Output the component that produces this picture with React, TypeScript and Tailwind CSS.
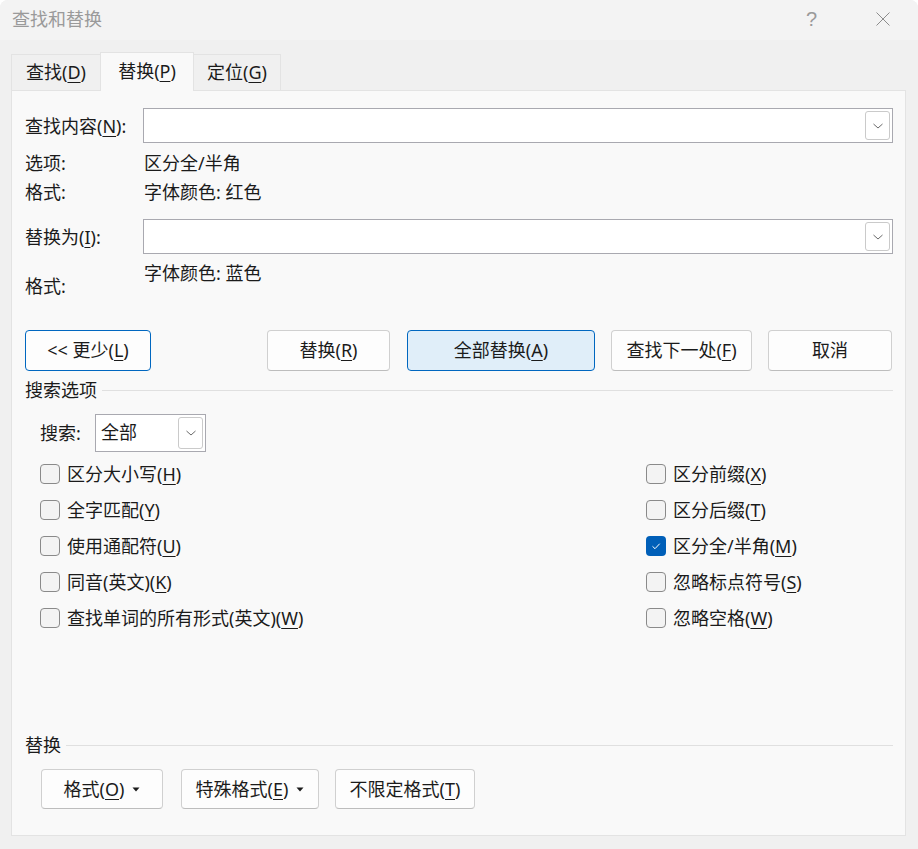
import type { ReactNode } from "react";

const ink = "text-[#1b1b1b]";

function Key({ k }: { k: string }) {
  return <span className="underline decoration-1 underline-offset-[3px]">{k}</span>;
}

function Chevron() {
  return (
    <svg width="12" height="8" viewBox="0 0 12 8" fill="none">
      <path d="M1.5 2l4.5 4 4.5-4" stroke="#6a6a6a" strokeWidth="1" />
    </svg>
  );
}

function Caret() {
  return (
    <svg width="8" height="5" viewBox="0 0 8 5" className="ml-[8px]">
      <path d="M0.5 0.5h7L4 4.5z" fill="#1b1b1b" />
    </svg>
  );
}

function Combo({ value, className }: { value?: string; className: string }) {
  return (
    <div className={`flex border border-[#a9a9b0] bg-white p-[2px] ${className}`}>
      <div className="flex-1 pl-[3px] leading-[30px]">{value}</div>
      <div className="flex w-[25px] items-center justify-center rounded-[3px] border border-[#cacaca] bg-white">
        <Chevron />
      </div>
    </div>
  );
}

function Button({
  children,
  width,
  tone = "plain",
  className = ""
}: {
  children: ReactNode;
  width: string;
  tone?: "plain" | "focus" | "default";
  className?: string;
}) {
  const look =
    tone === "default"
      ? "border-[#0067c0] bg-[#e0eef9]"
      : tone === "focus"
        ? "border-[#0067c0] bg-[#fdfdfd]"
        : "border-[#d0d0d0] border-b-[#bdbdbd] bg-[#fdfdfd]";
  return (
    <div className={`flex h-full items-center justify-center rounded-[4px] border ${look} ${width} ${className}`}>
      {children}
    </div>
  );
}

function Check({ label, checked = false }: { label: ReactNode; checked?: boolean }) {
  return (
    <div className="flex h-[36px] items-center gap-[7px]">
      {checked ? (
        <span className="flex h-[20px] w-[20px] items-center justify-center rounded-[4px] bg-[#005fb8]">
          <svg width="12" height="12" viewBox="0 0 12 12" fill="none">
            <path d="M2.5 6.3l2.5 2.4 4.7-5" stroke="white" strokeWidth="1" />
          </svg>
        </span>
      ) : (
        <span className="h-[20px] w-[20px] rounded-[4px] border border-[#8a8a8a] bg-[#f3f3f3]" />
      )}
      <span className="leading-[28px]">{label}</span>
    </div>
  );
}

function GroupTitle({ title, className = "" }: { title: string; className?: string }) {
  return (
    <div className={`flex items-center leading-[28px] ${className}`}>
      <span>{title}</span>
      <div className="ml-[5px] h-px flex-1 bg-[#e0e0e0]" />
    </div>
  );
}

function Tab({ children, width, active = false }: { children: ReactNode; width: string; active?: boolean }) {
  return (
    <div
      className={
        active
          ? `relative z-10 -mb-px flex h-[39px] items-center justify-center border border-b-0 border-[#e3e3e3] bg-[#f9f9f9] pb-[2px] ${width}`
          : `flex h-[36px] items-center justify-center border border-b-0 border-[#e3e3e3] bg-[#f0f0f0] ${width}`
      }
    >
      {children}
    </div>
  );
}

export default function App() {
  return (
    <div
      className={`flex h-[849px] w-[918px] flex-col overflow-hidden rounded-t-[8px] bg-[#f0f0f0] font-['Noto_Sans','Noto_Sans_CJK_SC',sans-serif] text-[18px] ${ink}`}
    >
      {/* title bar */}
      <div className="flex h-[40px] shrink-0 items-center bg-[#f3f3f3] pb-[3px] pl-[12px] text-[#9a9a9a]">
        <span className="leading-[28px]">查找和替换</span>
        <span className="ml-auto font-['Liberation_Sans',sans-serif] text-[20px] font-light leading-[28px]">?</span>
        <svg width="16" height="16" viewBox="0 0 16 16" className="ml-[58px] mr-[27px]" fill="none">
          <path d="M1.5 1.5l13 13M14.5 1.5l-13 13" stroke="#8c8c8c" strokeWidth="1" />
        </svg>
      </div>

      {/* tabs */}
      <div className="mt-[12px] flex h-[38px] items-end pl-[11px]">
        <Tab width="w-[90px]">
          查找(<Key k="D" />)
        </Tab>
        <Tab width="-ml-px w-[94px]" active>
          替换(<Key k="P" />)
        </Tab>
        <Tab width="-ml-px w-[88px]">
          定位(<Key k="G" />)
        </Tab>
      </div>

      {/* page */}
      <div className="ml-[11px] flex h-[746px] w-[895px] flex-col border border-[#e3e3e3] bg-[#f9f9f9] pl-[13px] pr-[12px] pt-[17px]">
        <div className="flex h-[35px] items-center">
          <div className="w-[118px] leading-[28px]">
            查找内容(<Key k="N" />):
          </div>
          <Combo className="h-[35px] flex-1" />
        </div>
        <div className="mt-[6px] flex leading-[29px]">
          <div className="w-[119px]">选项:</div>
          <div>区分全/半角</div>
        </div>
        <div className="flex leading-[29px]">
          <div className="w-[119px]">格式:</div>
          <div>字体颜色: 红色</div>
        </div>

        <div className="mt-[12px] flex h-[35px] items-center">
          <div className="w-[118px] leading-[28px]">
            替换为(<Key k="I" />):
          </div>
          <Combo className="h-[35px] flex-1" />
        </div>
        <div className="mt-[5px] flex leading-[28px]">
          <div className="w-[119px] pt-[13px]">格式:</div>
          <div>字体颜色: 蓝色</div>
        </div>

        {/* command buttons */}
        <div className="mt-[30px] flex h-[41px]">
          <Button width="w-[126px]" tone="focus">
            {"<< 更少("}
            <Key k="L" />)
          </Button>
          <Button width="w-[123px]" className="ml-[116px]">
            替换(<Key k="R" />)
          </Button>
          <Button width="w-[188px]" className="ml-[17px]" tone="default">
            全部替换(<Key k="A" />)
          </Button>
          <Button width="w-[141px]" className="ml-[16px]">
            查找下一处(<Key k="F" />)
          </Button>
          <Button width="w-[124px]" className="ml-[16px]">
            取消
          </Button>
        </div>

        <GroupTitle title="搜索选项" className="mt-[5px]" />

        <div className="mt-[10px] flex h-[38px] items-center pl-[15px]">
          <div className="w-[55px] leading-[28px]">搜索:</div>
          <Combo value="全部" className="h-[38px] w-[111px]" />
        </div>

        <div className="mt-[4px] flex pl-[15px]">
          <div className="w-[606px]">
            <Check label={<>区分大小写(<Key k="H" />)</>} />
            <Check label={<>全字匹配(<Key k="Y" />)</>} />
            <Check label={<>使用通配符(<Key k="U" />)</>} />
            <Check label={<>同音(英文)(<Key k="K" />)</>} />
            <Check label={<>查找单词的所有形式(英文)(<Key k="W" />)</>} />
          </div>
          <div>
            <Check label={<>区分前缀(<Key k="X" />)</>} />
            <Check label={<>区分后缀(<Key k="T" />)</>} />
            <Check label={<>区分全/半角(<Key k="M" />)</>} checked />
            <Check label={<>忽略标点符号(<Key k="S" />)</>} />
            <Check label={<>忽略空格(<Key k="W" />)</>} />
          </div>
        </div>

        <GroupTitle title="替换" className="mt-[95px]" />

        <div className="ml-[16px] mt-[10px] flex h-[40px]">
          <Button width="w-[122px]">
            格式(<Key k="O" />)
            <Caret />
          </Button>
          <Button width="w-[138px]" className="ml-[18px]">
            特殊格式(<Key k="E" />)
            <Caret />
          </Button>
          <Button width="w-[140px]" className="ml-[16px]">
            不限定格式(<Key k="T" />)
          </Button>
        </div>
      </div>
    </div>
  );
}
